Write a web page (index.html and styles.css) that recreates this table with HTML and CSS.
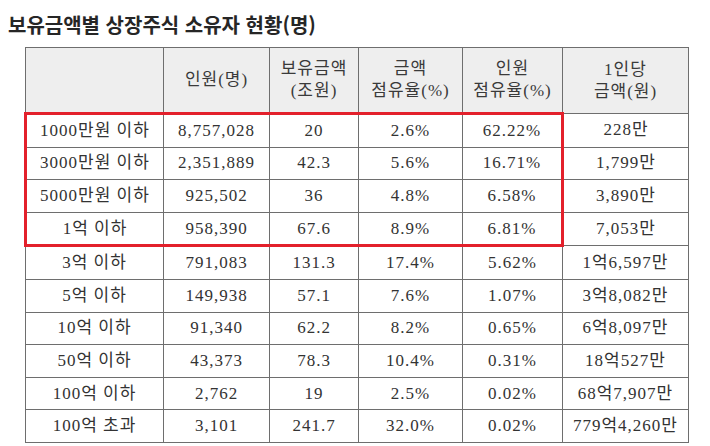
FILE: index.html
```html
<!DOCTYPE html>
<html lang="ko">
<head>
<meta charset="utf-8">
<title>보유금액별 상장주식 소유자 현황</title>
<link rel="stylesheet" href="styles.css">
</head>
<body>
<h1 class="title">보유금액별 상장주식 소유자 현황(명)</h1>
<table class="stats">
  <colgroup>
    <col class="c1"><col class="c2"><col class="c3"><col class="c4"><col class="c5"><col class="c6">
  </colgroup>
  <thead>
    <tr>
      <th></th>
      <th>인원(명)</th>
      <th>보유금액<br>(조원)</th>
      <th>금액<br>점유율(%)</th>
      <th>인원<br>점유율(%)</th>
      <th>1인당<br>금액(원)</th>
    </tr>
  </thead>
  <tbody>
    <tr class="hl hl-first"><td>1000만원 이하</td><td>8,757,028</td><td>20</td><td>2.6%</td><td>62.22%</td><td>228만</td></tr>
    <tr class="hl"><td>3000만원 이하</td><td>2,351,889</td><td>42.3</td><td>5.6%</td><td>16.71%</td><td>1,799만</td></tr>
    <tr class="hl"><td>5000만원 이하</td><td>925,502</td><td>36</td><td>4.8%</td><td>6.58%</td><td>3,890만</td></tr>
    <tr class="hl hl-last"><td>1억 이하</td><td>958,390</td><td>67.6</td><td>8.9%</td><td>6.81%</td><td>7,053만</td></tr>
    <tr><td>3억 이하</td><td>791,083</td><td>131.3</td><td>17.4%</td><td>5.62%</td><td>1억6,597만</td></tr>
    <tr><td>5억 이하</td><td>149,938</td><td>57.1</td><td>7.6%</td><td>1.07%</td><td>3억8,082만</td></tr>
    <tr><td>10억 이하</td><td>91,340</td><td>62.2</td><td>8.2%</td><td>0.65%</td><td>6억8,097만</td></tr>
    <tr><td>50억 이하</td><td>43,373</td><td>78.3</td><td>10.4%</td><td>0.31%</td><td>18억527만</td></tr>
    <tr><td>100억 이하</td><td>2,762</td><td>19</td><td>2.5%</td><td>0.02%</td><td>68억7,907만</td></tr>
    <tr><td>100억 초과</td><td>3,101</td><td>241.7</td><td>32.0%</td><td>0.02%</td><td>779억4,260만</td></tr>
  </tbody>
</table>
</body>
</html>
```
FILE: styles.css
```css
html, body {
  margin: 0;
  padding: 0;
  background: #ffffff;
}

body {
  width: 710px;
  height: 446px;
  overflow: hidden;
  font-family: "Liberation Serif", "Noto Sans CJK KR", serif;
  color: #333333;
}

.title {
  margin: 11px 0 0 8px;
  font-family: "Noto Sans CJK KR", sans-serif;
  font-size: 20px;
  line-height: 28px;
  font-weight: 700;
  color: #262626;
  letter-spacing: 0;
}

.stats {
  margin: 8px 0 0 24px;
  width: 663px;
  table-layout: fixed;
  border-collapse: collapse;
  border: 1px solid #7a7a7a;
  font-size: 17px;
}

.c1 { width: 138px; }
.c2 { width: 106px; }
.c3 { width: 89px; }
.c4 { width: 104px; }
.c5 { width: 100px; }
.c6 { width: 126px; }

.stats th,
.stats td {
  border: 1px solid #6e6e6e;
  text-align: center;
  vertical-align: middle;
  padding: 0;
  white-space: nowrap;
  letter-spacing: 1px;
}

.stats th {
  background: #eeeeee;
  font-weight: 400;
  height: 64px;
  line-height: 22px;
  color: #3a3a3a;
}

.stats td {
  height: 31.6px;
  line-height: 20px;
  color: #333333;
}

tr.hl td:first-child { border-left: 3px solid #e3202b; }
tr.hl td:nth-child(5) { border-right: 3px solid #e3202b; }
tr.hl-first td:nth-child(-n+5) { border-top: 3px solid #e3202b; }
tr.hl-last td:nth-child(-n+5) { border-bottom: 3px solid #e3202b; }
```
